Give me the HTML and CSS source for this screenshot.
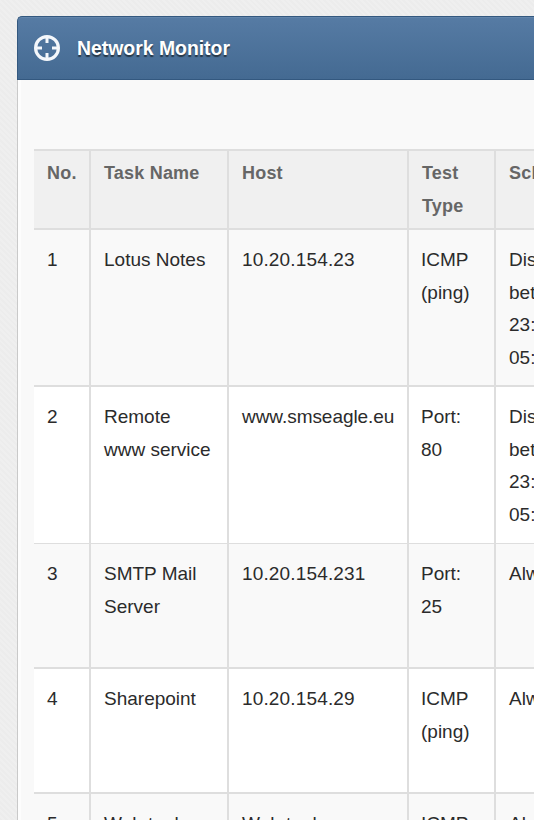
FILE: index.html
```html
<!DOCTYPE html>
<html lang="en">
<head>
  <meta charset="UTF-8">
  <meta name="viewport" content="width=device-width, initial-scale=1.0">
  <title>Network Monitor</title>
  <link rel="stylesheet" href="styles.css">
</head>
<body>

  <div class="box">
    <div class="box-header">
      <svg class="icon" viewBox="0 0 28 28" fill="none" stroke="#f4f7fb">
        <circle cx="14" cy="14" r="11.4" stroke-width="3.2"/>
        <path d="M14 2v7M14 19v7M2 14h7M19 14h7" stroke-width="3"/>
      </svg>
      <h2>Network Monitor</h2>
    </div>
    <div class="box-content">
      <table class="tasks">
        <colgroup>
          <col class="col-no">
          <col class="col-name">
          <col class="col-host">
          <col class="col-type">
          <col class="col-schedule">
        </colgroup>
        <thead>
          <tr>
            <th>No.</th>
            <th>Task Name</th>
            <th>Host</th>
            <th class="type">Test Type</th>
            <th>Schedule</th>
          </tr>
        </thead>
        <tbody>
          <tr class="tall">
            <td>1</td>
            <td>Lotus Notes</td>
            <td class="ip">10.20.154.23</td>
            <td class="type">ICMP (ping)</td>
            <td>Disabled between 23:00 - 05:00</td>
          </tr>
          <tr class="tall last-tall">
            <td>2</td>
            <td>Remote www service</td>
            <td class="url">www.smseagle.eu</td>
            <td class="type">Port: 80</td>
            <td>Disabled between 23:00 - 05:00</td>
          </tr>
          <tr>
            <td>3</td>
            <td>SMTP Mail Server</td>
            <td class="ip">10.20.154.231</td>
            <td class="type">Port: 25</td>
            <td>Always</td>
          </tr>
          <tr>
            <td>4</td>
            <td>Sharepoint</td>
            <td class="ip">10.20.154.29</td>
            <td class="type">ICMP (ping)</td>
            <td>Always</td>
          </tr>
          <tr>
            <td>5</td>
            <td>Web tool</td>
            <td>Web tool</td>
            <td class="type">ICMP (ping)</td>
            <td>Always</td>
          </tr>
        </tbody>
      </table>
    </div>
  </div>

</body>
</html>
```

FILE: styles.css
```css
body {
  margin: 0;
  height: 820px;
  overflow: hidden;
  font-family: "Liberation Sans", Arial, sans-serif;
  font-size: 19px;
  line-height: 32.5px;
  color: #2b2b2b;
  background: repeating-linear-gradient(45deg, #ececec 0, #ececec 2px, #efefef 2px, #efefef 4px);
}

.box {
  box-sizing: border-box;
  height: 804px;
  margin: 16px 0 0 17px;
  overflow: hidden;
}

.box-header {
  display: flex;
  align-items: center;
  box-sizing: border-box;
  height: 64px;
  padding-left: 15px;
  border: 1px solid #33587f;
  border-right: none;
  border-radius: 5px 0 0 0;
  background: linear-gradient(#567ba4, #446a92);
  box-shadow: inset 0 1px 0 #6285ab;
}

.icon {
  width: 28px;
  height: 28px;
  margin-right: 16px;
}

h2 {
  margin: 0;
  font-size: 19.4px;
  color: #fff;
  text-shadow: 0 2px 1px #263646;
}

.box-content {
  box-sizing: border-box;
  height: 740px;
  padding: 69px 0 0 16px;
  border-left: 1px solid #c9c9c9;
  background: #f9f9f9;
  box-shadow: inset 3px 0 0 #fdfdfd;
}

.tasks {
  width: 580px;
  table-layout: fixed;
  border-collapse: separate;
  border-spacing: 0;
  border-top: 2px solid #dedede;
}

.col-no {
  width: 57px;
}

.col-name {
  width: 138px;
}

.col-host {
  width: 180px;
}

.col-type {
  width: 87px;
}

th,
td {
  box-sizing: border-box;
  padding: 14px 12px 0 13px;
  border-right: 2px solid #dedede;
  border-bottom: 2px solid #dedede;
  text-align: left;
  vertical-align: top;
}

th {
  height: 79px;
  padding-top: 6px;
  font-size: 18px;
  letter-spacing: 0.2px;
  color: #666;
  background: #f0f0f0;
}

td {
  height: 125px;
}

td.type {
  padding-left: 12px;
}

.tall td {
  height: 157px;
}

.last-tall td {
  border-bottom-width: 1px;
}

tbody tr:nth-child(even) {
  background: #fff;
}

.ip {
  letter-spacing: 0.15px;
}

.url {
  padding-right: 10px;
  letter-spacing: -0.05px;
}
```
